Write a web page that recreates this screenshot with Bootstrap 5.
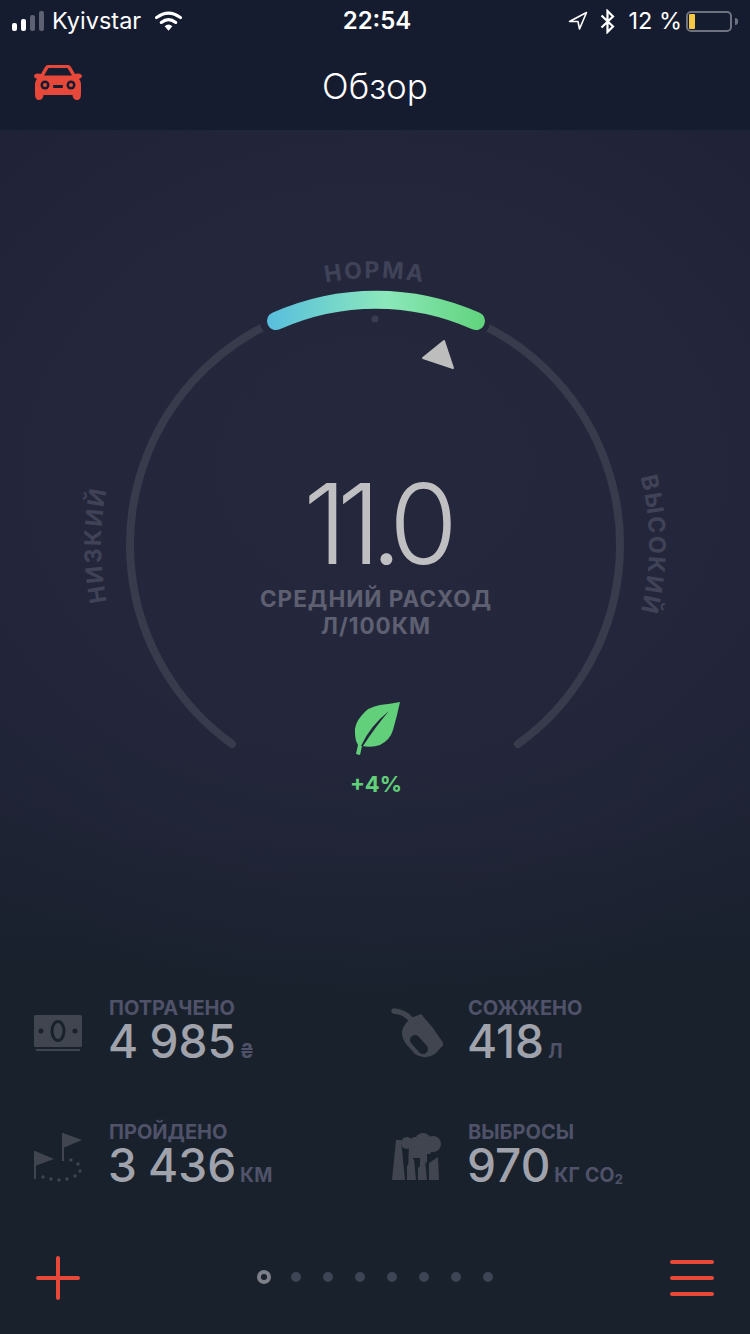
<!DOCTYPE html>
<html lang="ru">
<head>
    <meta charset="UTF-8">
    <meta name="viewport" content="width=device-width, initial-scale=1.0">
    <title>Обзор</title>
    <link href="https://cdn.jsdelivr.net/npm/bootstrap@5.3.0/dist/css/bootstrap.min.css" rel="stylesheet">
    <style>
        body { background: #19212c; font-family: Inter, "Liberation Sans", sans-serif; color: #fff; }
        .screen { width: 750px; height: 1334px; overflow: hidden; background:
            radial-gradient(ellipse 640px 530px at 50% 470px, #25283d 0, #24273b 50%, rgba(36,39,59,0) 100%),
            linear-gradient(#1e2136 0, #1e2235 55%, #19212c 76%); }
        .top-head { background: #161c2f; height: 130px; }
        .status-row { height: 42px; font-size: 23.5px; }
        .status-side { width: 300px; }
        .signal-bars { gap: 4px; height: 20px; margin-left: 12px; }
        .signal-bars i { display: block; width: 5px; background: #fff; border-radius: 2px; }
        .signal-bars i.off { background: #5d6171; }
        .sb-carrier { margin-left: 8px; margin-right: 14px; }
        .sb-time { font-weight: 600; margin-left: 4px; font-size: 24px; }
        .sb-pct { margin-left: 13px; margin-right: 4px; }
        .batt { width: 46px; height: 21px; border: 2px solid #6f7280; border-radius: 5px; padding: 1px; }
        .batt i { display: block; width: 6px; height: 100%; background: #f6c844; border-radius: 1px; }
        .batt-nub { width: 3px; height: 7px; background: #6f7280; border-radius: 0 3px 3px 0; margin-left: 3px; margin-right: 12px; }
        .nav-row { height: 88px; }
        .nav-side { width: 150px; padding-left: 34px; }
        .car-icon { margin-bottom: 9px; }
        .nav-title { font-size: 35px; font-weight: 300; }
        .main-area { height: 850px; }
        .gauge-svg { position: absolute; left: 0; top: 0; }
        .gauge-label { font-size: 23px; font-weight: 700; letter-spacing: 2.2px; fill: #404358; }
        .gauge-inner { padding-top: 338px; }
        .big-num { font-size: 111px; font-weight: 300; line-height: 1; letter-spacing: -10px; color: #c0c0c2; margin-left: 1px; height: 112px; }
        .big-cap { font-size: 22.5px; font-weight: 700; line-height: 27px; letter-spacing: 1px; color: #5e6072; margin-top: 5px; margin-left: 2px; }
        .leaf-icon { margin-top: 63px; display: block; margin-left: 3px; }
        .leaf-pct { font-size: 22px; font-weight: 700; color: #62d07a; margin-top: 16px; line-height: 27px; margin-left: 2px; }
        .stat-grid { padding: 17px 2px 0 34px; height: 265px; }
        .stat-row { height: 124px; }
        .stat-ico { width: 75px; flex: none; padding-top: 11px; }
        .stat-ico.ico-money { padding-top: 18px; }
        .stat-right .stat-ico { width: 77px; }
        .stat-label { font-size: 20px; font-weight: 700; line-height: 22px; color: #4f5269; }
        .stat-val { font-size: 46px; font-weight: 500; line-height: 44px; color: #a0a3ab; margin-left: -1px; word-spacing: -1px; }
        .stat-unit { font-size: 19.5px; font-weight: 700; color: #4f5269; margin-left: 4px; letter-spacing: .2px; word-spacing: 0; }
        .stat-unit sub { font-size: 13px; bottom: -.15em; }
        .factory-ico { margin-left: 1px; }
        .bottom-row { height: 89px; padding: 11px 36px 0; }
        .page-dots { gap: 22px; margin-top: -1px; margin-left: 2px; height: 44px; }
        .page-dots i { display: block; width: 10px; height: 10px; border-radius: 50%; background: #3d4453; }
        .page-dots i.on { width: 14px; height: 14px; background: none; border: 4px solid #7c7f87; margin-right: -2px; margin-left: -2px; }
    </style>
</head>
<body>
    <div class="screen d-flex flex-column">
        <!-- Status bar + title -->
        <div class="top-head">
            <div class="status-row d-flex align-items-center justify-content-between">
                <div class="status-side d-flex align-items-center">
                    <div class="signal-bars d-flex align-items-end">
                        <i style="height:8px"></i><i style="height:12px"></i><i class="off" style="height:16px"></i><i class="off" style="height:20px"></i>
                    </div>
                    <span class="sb-carrier">Kyivstar</span>
                    <svg width="27" height="20" viewBox="0 0 28 20"><path d="M1.5 6.5Q14-3 26.500 6.500" fill="none" stroke="#fff" stroke-width="3.200" stroke-linecap="round"/><path d="M6.500 11.500Q14 5.500 21.500 11.500" fill="none" stroke="#fff" stroke-width="3.200" stroke-linecap="round"/><path d="M10 15.500Q14 12 18 15.500L14 20Z" fill="#fff"/></svg>
                </div>
                <span class="sb-time">22:54</span>
                <div class="status-side d-flex align-items-center justify-content-end">
                    <svg class="me-2" width="20" height="20" viewBox="0 0 20 20"><path d="M18.500 1.500L1.500 10.500H10L11.500 18Z" fill="none" stroke="#fff" stroke-width="1.600" stroke-linejoin="round"/></svg>
                    <svg class="ms-1" width="15" height="25" viewBox="0 0 15 25"><path d="M1.500 6.500L13 17.500L7.500 23V2L13 7.500L1.500 18.500" fill="none" stroke="#fff" stroke-width="2.200"/></svg>
                    <span class="sb-pct">12 %</span>
                    <div class="batt"><i></i></div>
                    <div class="batt-nub"></div>
                </div>
            </div>
            <div class="nav-row d-flex align-items-center justify-content-between">
                <div class="nav-side">
                    <svg class="d-block car-icon" width="48" height="36" viewBox="0 0 48 36">
                        <path d="M14 1H34Q36 1 37 3L41 10L44 9.500Q48 10 48 12Q48 14 45 15Q47 17 47 20V30Q47 36 43 36Q39 36 38.500 31H9.500Q9 36 5 36Q1 36 1 30V20Q1 17 3 15Q0 14 0 12Q0 10 4 9.500L7 10L11 3Q12 1 14 1Z" fill="#e8483a"/>
                        <path d="M14.500 4H33.500L38 11.500H10Z" fill="#161c2f"/>
                        <circle cx="11" cy="21" r="4.500" fill="#161c2f"/><circle cx="11" cy="21" r="2" fill="#e8483a"/>
                        <circle cx="37" cy="21" r="4.500" fill="#161c2f"/><circle cx="37" cy="21" r="2" fill="#e8483a"/>
                        <rect x="19" y="21" width="10" height="3" rx="1" fill="#161c2f"/>
                    </svg>
                </div>
                <span class="nav-title">Обзор</span>
                <div class="nav-side"></div>
            </div>
        </div>

        <!-- Gauge -->
        <div class="main-area position-relative">
            <svg class="gauge-svg" width="750" height="850" viewBox="0 130 750 850">
                <defs>
                    <linearGradient id="normGrad" gradientUnits="userSpaceOnUse" x1="270" y1="0" x2="481" y2="0">
                        <stop offset="0" stop-color="#59bfdd"/>
                        <stop offset=".55" stop-color="#8be8bb"/>
                        <stop offset="1" stop-color="#62d47e"/>
                    </linearGradient>
                    <path id="arcLeft" d="M375 819A274 274 0 0 1 375 271"/>
                    <path id="arcTop" d="M108 545A267 267 0 0 1 642 545"/>
                    <path id="arcRight" d="M375 271A274 274 0 0 1 375 819"/>
                </defs>
                <path d="M232 744A245 245 0 1 1 518 744" fill="none" stroke="#383b4b" stroke-width="8" stroke-linecap="round"/>
                <path d="M273 322A245 245 0 0 1 477 322" fill="none" stroke="#24273b" stroke-width="26" stroke-linecap="round"/>
                <path d="M276 321A245 245 0 0 1 476 321" fill="none" stroke="url(#normGrad)" stroke-width="18" stroke-linecap="round"/>
                <circle cx="375" cy="319" r="3.500" fill="#3a3d4f"/>
                <path d="M444 341L453 368L423 358Z" fill="#bdbdbd" stroke="#bdbdbd" stroke-width="2" stroke-linejoin="round"/>
                <text class="gauge-label" text-anchor="middle"><textPath href="#arcLeft" startOffset="50%">НИЗКИЙ</textPath></text>
                <text class="gauge-label" text-anchor="middle"><textPath href="#arcTop" startOffset="50%">НОРМА</textPath></text>
                <text class="gauge-label" text-anchor="middle"><textPath href="#arcRight" startOffset="50%">ВЫСОКИЙ</textPath></text>
            </svg>
            <div class="gauge-inner position-relative d-flex flex-column align-items-center text-center">
                <div class="big-num">11.0</div>
                <div class="big-cap">СРЕДНИЙ РАСХОД<br>Л/100КМ</div>
                <svg class="leaf-icon" width="46" height="53" viewBox="0 0 46 53">
                    <path d="M46 0Q36 2 26 3Q14 5 8 13Q0 22 1 31Q1 38 4 43L2 52L6 53L8 44Q18 46 26 43Q36 38 39 28Q43 14 46 0Z" fill="#62d07a"/>
                    <path d="M7 44Q16 24 35 9Q22 24 9 44Z" fill="#24273b"/>
                </svg>
                <div class="leaf-pct">+4%</div>
            </div>
        </div>

        <!-- Stats -->
        <div class="stat-grid row g-0 align-content-start">
            <div class="col-6 stat-row d-flex">
                <div class="stat-ico ico-money">
                    <svg class="d-block" width="48" height="37" viewBox="0 0 48 37">
                        <rect y="0" width="48" height="32" rx="1.500" fill="#41454f"/>
                        <ellipse cx="24" cy="16" rx="6" ry="9.500" fill="none" stroke="#19212c" stroke-width="3"/>
                        <circle cx="7" cy="16" r="2.500" fill="#19212c"/><circle cx="41" cy="16" r="2.500" fill="#19212c"/>
                        <rect x="2" y="34" width="44" height="2" fill="#41454f"/>
                    </svg>
                </div>
                <div>
                    <div class="stat-label">ПОТРАЧЕНО</div>
                    <div class="stat-val">4 985<span class="stat-unit">₴</span></div>
                </div>
            </div>
            <div class="col-6 stat-row stat-right d-flex">
                <div class="stat-ico">
                    <svg class="d-block" width="52" height="50" viewBox="0 0 52 50">
                        <path d="M3 3Q15 4 22 14" fill="none" stroke="#41454f" stroke-width="5.500" stroke-linecap="round"/>
                        <path d="M20 10L30 6L42 20L53 36L46 44Q42 48 36 49Q30 50 24 46L15 36Q9 28 12 20Q15 14 20 10Z" fill="#41454f"/>
                        <path d="M24 32L32 41" stroke="#19212c" stroke-width="10" stroke-linecap="round"/>
                    </svg>
                </div>
                <div>
                    <div class="stat-label">СОЖЖЕНО</div>
                    <div class="stat-val">418<span class="stat-unit">Л</span></div>
                </div>
            </div>
            <div class="col-6 stat-row d-flex">
                <div class="stat-ico">
                    <svg class="d-block" width="50" height="50" viewBox="0 0 50 50">
                        <path d="M1 19V47" stroke="#41454f" stroke-width="2"/><path d="M1 19L20 27L1 34Z" fill="#41454f"/>
                        <path d="M29 1V29" stroke="#41454f" stroke-width="2"/><path d="M29 1L48 8L29 16Z" fill="#41454f"/>
                        <g fill="#41454f"><circle cx="9" cy="45" r="1.700"/><circle cx="17" cy="47" r="1.700"/><circle cx="25" cy="48" r="1.700"/><circle cx="33" cy="47" r="1.700"/><circle cx="41" cy="44" r="1.700"/><circle cx="46" cy="39" r="1.700"/><circle cx="44" cy="32" r="1.700"/><circle cx="37" cy="28" r="1.700"/></g>
                    </svg>
                </div>
                <div>
                    <div class="stat-label">ПРОЙДЕНО</div>
                    <div class="stat-val">3 436<span class="stat-unit">КМ</span></div>
                </div>
            </div>
            <div class="col-6 stat-row stat-right d-flex">
                <div class="stat-ico">
                    <svg class="d-block factory-ico" width="50" height="50" viewBox="0 0 50 50">
                        <g fill="#41454f">
                            <path d="M4 8L9 8L13 48H0Z"/>
                            <circle cx="15" cy="11" r="6"/><circle cx="23" cy="10" r="5"/><circle cx="31" cy="9" r="8"/><circle cx="41" cy="12" r="8"/>
                            <path d="M17 12H45L38 22H35V30L28 35V26H21V36L16 40Z"/>
                            <path d="M15 34L22 27L24 48H15Z"/><path d="M26 36L33 29L35 48H26Z"/><path d="M37 31L46 25L47 48H37Z"/>
                        </g>
                    </svg>
                </div>
                <div>
                    <div class="stat-label">ВЫБРОСЫ</div>
                    <div class="stat-val">970<span class="stat-unit">КГ СО<sub>2</sub></span></div>
                </div>
            </div>
        </div>

        <!-- Bottom bar -->
        <div class="bottom-row d-flex align-items-start justify-content-between">
            <svg class="d-block" width="44" height="44" viewBox="0 0 44 44"><path d="M22 2V42M2 22H42" stroke="#e8483a" stroke-width="4" stroke-linecap="round"/></svg>
            <div class="page-dots d-flex align-items-center">
                <i class="on"></i><i></i><i></i><i></i><i></i><i></i><i></i><i></i>
            </div>
            <svg class="d-block" width="44" height="44" viewBox="0 0 44 44"><path d="M2 6H42M2 22H42M2 38H42" stroke="#e8483a" stroke-width="4" stroke-linecap="round"/></svg>
        </div>
    </div>
    <script src="https://cdn.jsdelivr.net/npm/bootstrap@5.3.0/dist/js/bootstrap.bundle.min.js"></script>
</body>
</html>
